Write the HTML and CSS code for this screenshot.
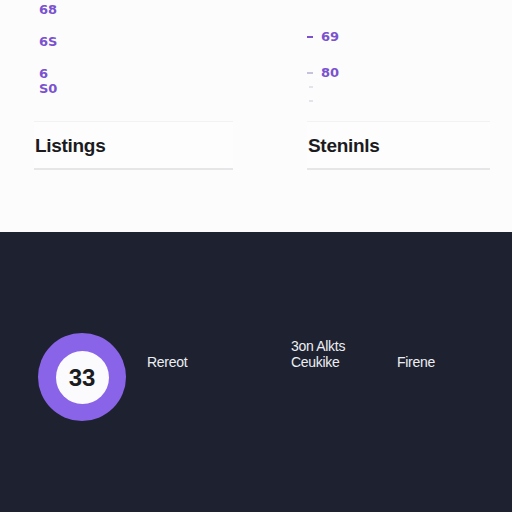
FILE: index.html
```html
<!DOCTYPE html>
<html>
<head>
<meta charset="utf-8">
<link rel="stylesheet" href="styles.css">
</head>
<body>
<div class="top">
  <div class="nums">
    <div class="col-left">
      <div class="num">68</div>
      <div class="num">6S</div>
      <div class="num">6</div>
      <div class="num tight">S0</div>
    </div>
    <div class="col-right">
      <div class="row"><span class="dash"></span><span class="num">69</span></div>
      <div class="row"><span class="dash light"></span><span class="num">80</span></div>
      <div class="row small"><span class="dash faint"></span></div>
      <div class="row small"><span class="dash faint"></span></div>
    </div>
  </div>
  <div class="cards">
    <div class="card"><span class="card-title">Listings</span></div>
    <div class="card"><span class="card-title">Steninls</span></div>
  </div>
</div>
<div class="dark">
  <div class="ring"><div class="ring-inner">33</div></div>
  <div class="label l1">Rereot</div>
  <div class="label-group">
    <div class="label">3on Alkts</div>
    <div class="label">Ceukike</div>
  </div>
  <div class="label l1">Firene</div>
</div>
</body>
</html>
```
FILE: styles.css
```css
* { box-sizing: border-box; }
html, body { margin: 0; padding: 0; }
body {
  width: 512px;
  height: 512px;
  overflow: hidden;
  font-family: "Liberation Sans", Arial, sans-serif;
  background: #1e2230;
}
.top {
  height: 232px;
  background: #fcfcfc;
  padding-left: 34px;
  padding-right: 22px;
}
.nums {
  height: 121px;
  display: grid;
  grid-template-columns: 273px 1fr;
}
.num {
  font-family: "DejaVu Sans", sans-serif;
  font-weight: bold;
  font-size: 13px;
  line-height: 16px;
  color: #7a52cf;
}
.col-left {
  padding-left: 5px;
  padding-top: 2px;
  display: flex;
  flex-direction: column;
  gap: 16px;
}
.col-left .tight { margin-top: -17px; }
.col-right {
  padding-top: 29px;
  display: flex;
  flex-direction: column;
}
.row {
  display: flex;
  align-items: center;
  height: 16px;
  gap: 8px;
}
.row + .row { margin-top: 20px; }
.row.small { height: 4px; }
.row.small + .row.small { margin-top: 10px; }
.col-right .row:nth-child(3) { margin-top: 4px; }
.dash {
  display: block;
  width: 6px;
  height: 2px;
  background: #7a52cf;
}
.dash.light { background: #c9c0dc; }
.dash.faint { background: #e4e2ea; margin-left: 2px; width: 4px; }
.cards {
  display: grid;
  grid-template-columns: 199px 183px;
  column-gap: 74px;
}
.card {
  height: 49px;
  border-top: 1px solid #f2f2f2;
  border-bottom: 2px solid #e6e6e8;
  background: #fdfdfd;
  display: flex;
  align-items: center;
  padding-left: 1px;
  padding-top: 2px;
}
.card-title {
  font-size: 19px;
  font-weight: bold;
  letter-spacing: -0.3px;
  color: #1b1b1f;
}
.dark {
  height: 280px;
  background: #1e2230;
  padding-top: 101px;
  padding-left: 38px;
  display: grid;
  grid-template-columns: 109px 144px 106px auto;
  align-items: start;
}
.ring {
  width: 88px;
  height: 88px;
  border-radius: 50%;
  background: #8a64e8;
  display: flex;
  align-items: center;
  justify-content: center;
}
.ring-inner {
  width: 53px;
  height: 53px;
  border-radius: 50%;
  background: #fbfbfd;
  display: flex;
  align-items: center;
  justify-content: center;
  font-size: 24px;
  font-weight: bold;
  color: #1a1c22;
  padding-top: 1px;
}
.label {
  font-size: 14px;
  line-height: 16px;
  color: #eceef3;
  letter-spacing: -0.3px;
}
.l1 { margin-top: 21px; }
.label-group { margin-top: 5px; }
```
